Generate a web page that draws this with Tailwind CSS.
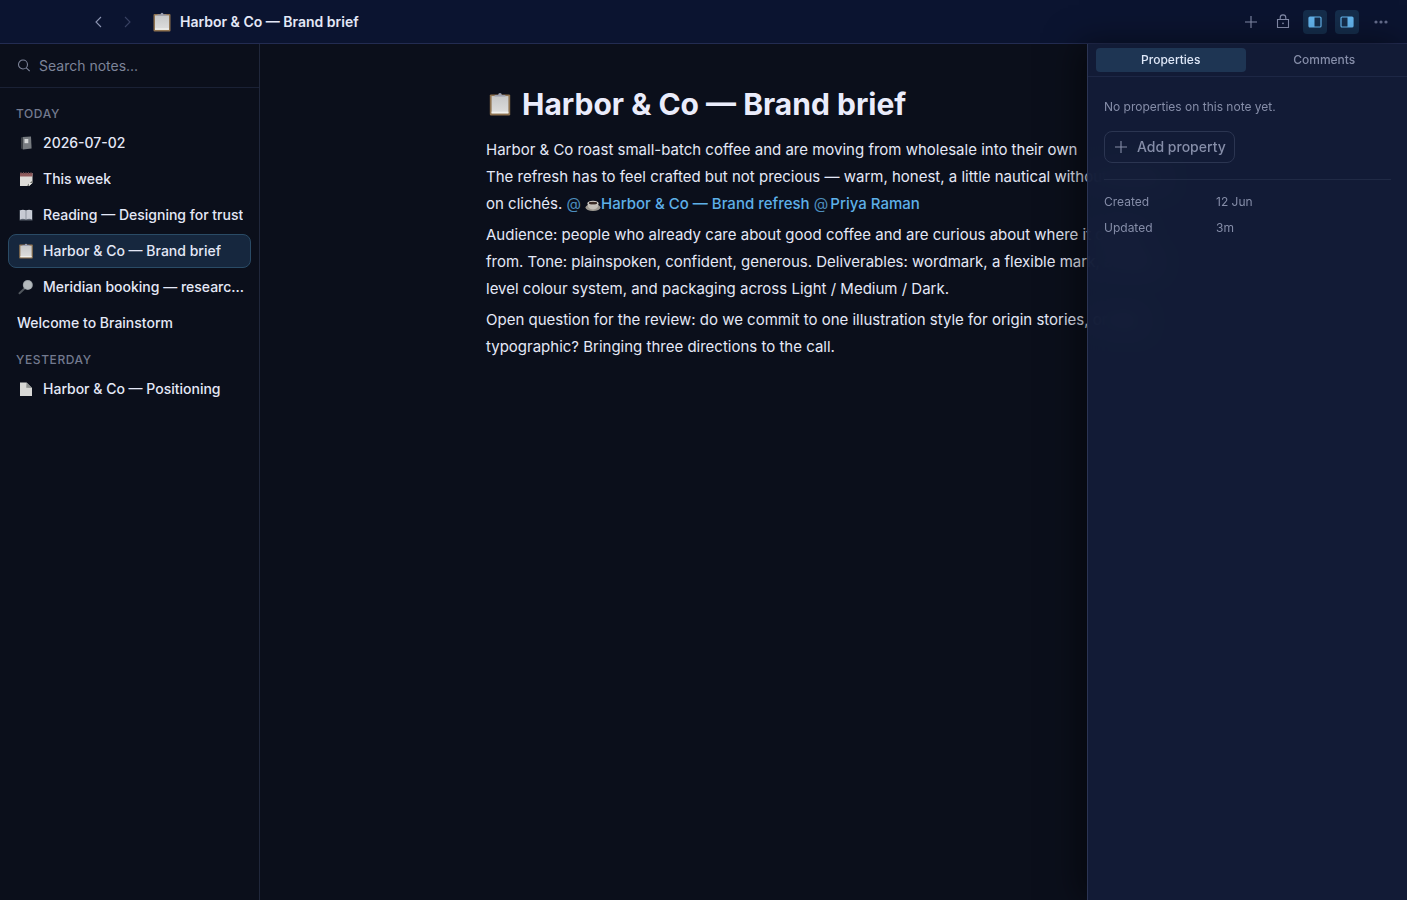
<!DOCTYPE html>
<html lang="en">
<head>
    <meta charset="UTF-8">
    <meta name="viewport" content="width=device-width, initial-scale=1.0">
    <title>Harbor &amp; Co — Brand brief</title>
    <script src="https://cdn.jsdelivr.net/npm/@tailwindcss/browser@4"></script>
</head>
<body class="h-screen flex flex-col overflow-hidden bg-[#0b0f1b] font-['Inter',sans-serif] text-[#e4e8f7]">
    <!-- Shared icons -->
    <svg class="absolute size-0" aria-hidden="true">
        <defs>
            <linearGradient id="paper" x1="0" y1="0" x2="0" y2="1">
                <stop offset="0" stop-color="#c6c7c8"/>
                <stop offset="1" stop-color="#dededd"/>
            </linearGradient>
            <linearGradient id="cover" x1="0" y1="0" x2="1" y2="0">
                <stop offset="0" stop-color="#5c6066"/>
                <stop offset="1" stop-color="#3c4046"/>
            </linearGradient>
        </defs>
        <symbol id="clipboard" viewBox="0 0 20 20">
            <rect x="1.5" y="2" width="17" height="17.5" rx="1" fill="#8f7350"/>
            <rect x="3" y="3.4" width="14" height="14.4" fill="url(#paper)"/>
            <path d="M3 16.400h14v1.400H3z" fill="#f2f2ee"/>
            <path d="M5.500 3.800V2.400h3A1.600 1.600 0 0 1 10 .8a1.600 1.600 0 0 1 1.500 1.600h3v1.400z" fill="#9a9eae"/>
        </symbol>
        <symbol id="plus" viewBox="0 0 16 16">
            <path d="M8 2v12M2 8h12" fill="none" stroke="currentColor" stroke-width="1.1"/>
        </symbol>
    </svg>

    <header class="h-11 shrink-0 flex items-center justify-between border-b border-[#232c52] bg-[#0b1430] pl-[87px] pr-3">
        <div class="flex items-center">
            <nav class="flex items-center gap-[5px]" aria-label="History">
                <button type="button" aria-label="Back" class="size-6 flex items-center justify-center text-[#8d95b2]">
                    <svg class="size-3.5" viewBox="0 0 14 14" fill="none" stroke="currentColor" stroke-width="1.1"><path d="M9 2 4 7l5 5"/></svg>
                </button>
                <button type="button" aria-label="Forward" disabled class="size-6 flex items-center justify-center text-[#384162]">
                    <svg class="size-3.5" viewBox="0 0 14 14" fill="none" stroke="currentColor" stroke-width="1.1"><path d="m4 2 5 5-5 5"/></svg>
                </button>
            </nav>
            <svg class="size-5 ml-3" aria-hidden="true"><use href="#clipboard"/></svg>
            <span class="ml-2 text-sm font-semibold">Harbor &amp; Co — Brand brief</span>
        </div>
        <div class="flex items-center gap-2 text-[#858dab]">
            <button type="button" aria-label="New note" class="size-6 flex items-center justify-center">
                <svg class="size-4"><use href="#plus"/></svg>
            </button>
            <button type="button" aria-label="Lock note" class="size-6 flex items-center justify-center">
                <svg class="size-4" viewBox="0 0 16 16" fill="none" stroke="currentColor" stroke-width="1.1"><path d="M2.500 5.500h11v8h-11zM5.200 5.500V3.700a2.800 2.800 0 0 1 5.600 0v1.800"/><circle cx="8" cy="9.300" r=".9" fill="currentColor" stroke="none"/></svg>
            </button>
            <button type="button" aria-label="Toggle sidebar" aria-pressed="true" class="size-6 flex items-center justify-center rounded bg-[#152d4b] text-[#64b5ee]">
                <svg class="size-4" viewBox="0 0 16 16"><rect x="2" y="3" width="12" height="10" rx="1" fill="none" stroke="currentColor" stroke-width="1.2"/><path d="M2 3h5.500v10H2z" fill="currentColor"/></svg>
            </button>
            <button type="button" aria-label="Toggle properties" aria-pressed="true" class="size-6 flex items-center justify-center rounded bg-[#152d4b] text-[#64b5ee]">
                <svg class="size-4" viewBox="0 0 16 16"><rect x="2" y="3" width="12" height="10" rx="1" fill="none" stroke="currentColor" stroke-width="1.2"/><path d="M8.500 3H14v10H8.500z" fill="currentColor"/></svg>
            </button>
            <button type="button" aria-label="More" class="w-7 h-6 flex items-center justify-center text-[#656d8c]">
                <svg class="size-4" viewBox="0 0 16 16" fill="currentColor"><circle cx="3" cy="8" r="1.600"/><circle cx="8" cy="8" r="1.600"/><circle cx="13" cy="8" r="1.600"/></svg>
            </button>
        </div>
    </header>

    <div class="flex-1 min-h-0 flex relative">
        <aside class="w-[260px] shrink-0 border-r border-[#20273b]">
            <label class="h-11 flex items-center gap-[7px] border-b border-[#1a2135] px-4 text-[#7d8499]">
                <svg class="size-4 shrink-0" viewBox="0 0 16 16" fill="none" stroke="currentColor" stroke-width="1.1" aria-hidden="true"><circle cx="7" cy="6.500" r="4.500"/><path d="m10.300 9.800 3.400 3.400"/></svg>
                <input type="text" aria-label="Search notes" placeholder="Search notes..." class="min-w-0 flex-1 bg-transparent text-sm outline-none placeholder:text-[#7d8499]">
            </label>
            <nav class="px-2 pt-3.5 text-sm font-medium" aria-label="Notes">
                <h2 class="h-6 px-2 flex items-center text-xs font-medium tracking-wider text-[#737a8f]">TODAY</h2>
                <ul class="flex flex-col gap-0.5">
                    <li>
                        <a href="#" class="h-[34px] flex items-center gap-2 rounded-lg border border-transparent pl-2 pr-1">
                            <svg class="size-[18px] shrink-0" viewBox="0 0 18 18"><path d="M5.500 3 14 2.500l.6 12L6 15.500z" fill="#777b80"/><path d="M4 3.500v11l2 1V3z" fill="#3c4046"/><path d="M7.500 5h3.800v4.200H7.500z" fill="#d4d6d7"/></svg>
                            <span class="truncate">2026-07-02</span>
                        </a>
                    </li>
                    <li>
                        <a href="#" class="h-[34px] flex items-center gap-2 rounded-lg border border-transparent pl-2 pr-1">
                            <svg class="size-[18px] shrink-0" viewBox="0 0 18 18"><path d="M3 3h12.500v9.500L12 16H3z" fill="#dedcd9"/><path d="M3 3h12.500v3.500H3z" fill="#8f5b5c"/><path d="M4 2v2M6.500 2v2M9 2v2M11.500 2v2M14 2v2" stroke="#66484c"/><path d="m10 15.500 5.500-5v2L12 16z" fill="#72746f"/><path d="M12 16v-3h3.500z" fill="#eceae6"/></svg>
                            <span class="truncate">This week</span>
                        </a>
                    </li>
                    <li>
                        <a href="#" class="h-[34px] flex items-center gap-2 rounded-lg border border-transparent pl-2 pr-1">
                            <svg class="size-[18px] shrink-0" viewBox="0 0 18 18"><path d="M2.500 4h13v10.500h-13z" fill="#59616d"/><path d="M3 4.500q3-1.500 5.700 0v9q-2.700-1.300-5.700 0zM15 4.500q-3-1.500-5.700 0v9q2.700-1.300 5.700 0z" fill="#ccd0d9"/><path d="M5 5v8M7 5v8M11 5v8M13 5v8" stroke="#b8bdc8" stroke-width=".6"/></svg>
                            <span class="truncate">Reading — Designing for trust</span>
                        </a>
                    </li>
                    <li>
                        <a href="#" aria-current="page" class="h-[34px] flex items-center gap-2 rounded-lg border border-[#2a4b66] bg-[#16273e] pl-2 pr-1">
                            <svg class="size-[18px] shrink-0 p-px"><use href="#clipboard"/></svg>
                            <span class="truncate">Harbor &amp; Co — Brand brief</span>
                        </a>
                    </li>
                    <li>
                        <a href="#" class="h-[34px] flex items-center gap-2 rounded-lg border border-transparent pl-2 pr-1">
                            <svg class="size-[18px] shrink-0" viewBox="0 0 18 18"><path d="m7.500 10.500-5 4.700" stroke="#50565d" stroke-width="2" stroke-linecap="round"/><circle cx="10.800" cy="7" r="5" fill="#9da3a8"/><circle cx="10.800" cy="7" r="4" fill="#b5babd"/></svg>
                            <span class="truncate">Meridian booking — research notes</span>
                        </a>
                    </li>
                    <li>
                        <a href="#" class="h-[34px] flex items-center rounded-lg border border-transparent px-2">
                            <span class="truncate">Welcome to Brainstorm</span>
                        </a>
                    </li>
                </ul>
                <h2 class="mt-2 h-6 px-2 flex items-center text-xs font-medium tracking-wider text-[#737a8f]">YESTERDAY</h2>
                <ul>
                    <li>
                        <a href="#" class="h-[34px] flex items-center gap-2 rounded-lg border border-transparent pl-2 pr-1">
                            <svg class="size-[18px] shrink-0" viewBox="0 0 18 18"><path d="M3 2.500h6.500L15 8v8H3z" fill="#d8d8d6"/><path d="M9.500 2.500 15 8l-5.800-.3z" fill="#8e9190"/></svg>
                            <span class="truncate">Harbor &amp; Co — Positioning</span>
                        </a>
                    </li>
                </ul>
            </nav>
        </aside>

        <main class="flex-1 min-w-0 pt-10">
            <article class="max-w-[695px] mx-auto text-[15px] leading-[27px]">
                <h1 class="mb-3 flex items-center gap-2 text-[30px] leading-10 font-bold text-[#eaecfb]">
                    <svg class="size-7 shrink-0 p-0.5" aria-hidden="true"><use href="#clipboard"/></svg>
                    Harbor &amp; Co — Brand brief
                </h1>
                <div class="flex flex-col gap-1 whitespace-nowrap">
                    <p>Harbor &amp; Co roast small-batch coffee and are moving from wholesale into their own<br>
                    The refresh has to feel crafted but not precious — warm, honest, a little nautical without leaning<br>
                    on clichés. <a href="#" class="font-medium text-[#5eb0e8]"><span class="mr-1 font-normal text-[#4d8ebe]">@</span><svg class="inline size-4" viewBox="0 0 16 16" aria-hidden="true"><ellipse cx="8" cy="10.500" rx="7.500" ry="3.500" fill="#9c9890"/><path d="M2.500 6h11q0 6.500-5.500 6.500T2.500 6z" fill="#c4c0b8"/><ellipse cx="8" cy="6" rx="5.500" ry="2.200" fill="#dedbd5"/><ellipse cx="8" cy="6.200" rx="4.300" ry="1.400" fill="#3a2c26"/></svg>Harbor &amp; Co — Brand refresh</a> <a href="#" class="font-medium text-[#5eb0e8]"><span class="mr-0.5 font-normal text-[#4d8ebe]">@</span>Priya Raman</a></p>
                    <p>Audience: people who already care about good coffee and are curious about where it comes<br>
                    from. Tone: plainspoken, confident, generous. Deliverables: wordmark, a flexible mark, a three-<br>
                    level colour system, and packaging across Light / Medium / Dark.</p>
                    <p>Open question for the review: do we commit to one illustration style for origin stories, or stay<br>
                    typographic? Bringing three directions to the call.</p>
                </div>
            </article>
        </main>

        <!-- Properties panel floats over the note -->
        <aside class="absolute inset-y-0 right-0 w-80 border-l border-[#2b3453] bg-[#131d38]/94 backdrop-blur-md shadow-[-8px_0_32px_rgba(0,0,0,0.5)] text-xs text-[#858da8]">
            <div role="tablist" class="h-[33px] grid grid-cols-2 gap-1 border-b border-[#1d2745] px-2 py-1">
                <button type="button" role="tab" aria-selected="true" class="rounded bg-[#1e3553] font-medium text-[#dfe8f8]">Properties</button>
                <button type="button" role="tab" aria-selected="false" class="rounded font-medium">Comments</button>
            </div>
            <div class="px-4 pt-5">
                <p class="leading-5">No properties on this note yet.</p>
                <button type="button" class="mt-3.5 h-8 flex items-center gap-2 rounded-lg border border-[#2b3551] px-2 text-sm font-medium">
                    <svg class="size-4"><use href="#plus"/></svg>
                    Add property
                </button>
                <dl class="mt-4 grid grid-cols-[112px_1fr] gap-y-1.5 border-t border-[#202a45] pt-3 leading-5">
                    <dt>Created</dt><dd>12 Jun</dd>
                    <dt>Updated</dt><dd>3m</dd>
                </dl>
            </div>
        </aside>
    </div>
</body>
</html>
